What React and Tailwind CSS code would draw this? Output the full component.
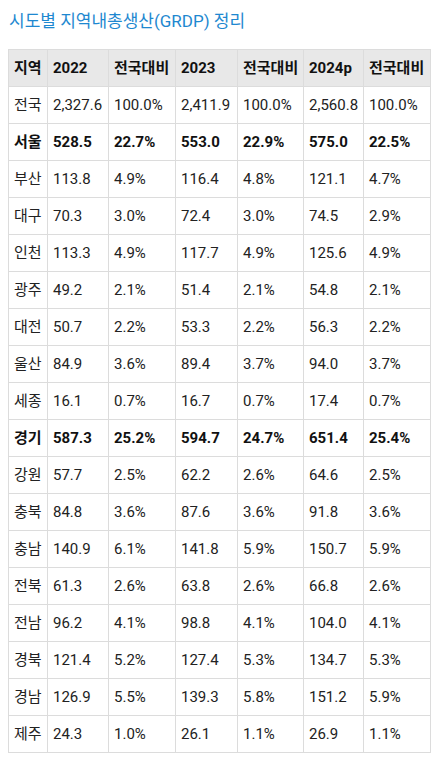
import React from "react";

const ROWS = [
  ["전국", "2,327.6", "100.0%", "2,411.9", "100.0%", "2,560.8", "100.0%"],
  ["서울", "528.5", "22.7%", "553.0", "22.9%", "575.0", "22.5%", true],
  ["부산", "113.8", "4.9%", "116.4", "4.8%", "121.1", "4.7%"],
  ["대구", "70.3", "3.0%", "72.4", "3.0%", "74.5", "2.9%"],
  ["인천", "113.3", "4.9%", "117.7", "4.9%", "125.6", "4.9%"],
  ["광주", "49.2", "2.1%", "51.4", "2.1%", "54.8", "2.1%"],
  ["대전", "50.7", "2.2%", "53.3", "2.2%", "56.3", "2.2%"],
  ["울산", "84.9", "3.6%", "89.4", "3.7%", "94.0", "3.7%"],
  ["세종", "16.1", "0.7%", "16.7", "0.7%", "17.4", "0.7%"],
  ["경기", "587.3", "25.2%", "594.7", "24.7%", "651.4", "25.4%", true],
  ["강원", "57.7", "2.5%", "62.2", "2.6%", "64.6", "2.5%"],
  ["충북", "84.8", "3.6%", "87.6", "3.6%", "91.8", "3.6%"],
  ["충남", "140.9", "6.1%", "141.8", "5.9%", "150.7", "5.9%"],
  ["전북", "61.3", "2.6%", "63.8", "2.6%", "66.8", "2.6%"],
  ["전남", "96.2", "4.1%", "98.8", "4.1%", "104.0", "4.1%"],
  ["경북", "121.4", "5.2%", "127.4", "5.3%", "134.7", "5.3%"],
  ["경남", "126.9", "5.5%", "139.3", "5.8%", "151.2", "5.9%"],
  ["제주", "24.3", "1.0%", "26.1", "1.1%", "26.9", "1.1%"],
];

const HEAD = ["지역", "2022", "전국대비", "2023", "전국대비", "2024p", "전국대비"];

export default function App() {
  return (
    <div
      className="bg-white px-2 pt-[10px] pb-2 text-[#222]"
      style={{ fontFamily: 'Roboto, "Noto Sans CJK KR", sans-serif' }}
    >
      <h2 className="mb-[17px] pl-[1px] text-[17px] leading-[22px] font-normal text-[#1e88d0]">
        시도별 지역내총생산(GRDP) 정리
      </h2>
      <table className="w-[422px] table-fixed border-collapse text-[15px]">
        <colgroup>
          <col className="w-[39px]" />
          <col className="w-[61px]" />
          <col className="w-[67px]" />
          <col className="w-[62px]" />
          <col className="w-[66px]" />
          <col className="w-[60px]" />
          <col className="w-[67px]" />
        </colgroup>
        <thead>
          <tr className="bg-[#e8e8e8]">
            {HEAD.map((h, i) => (
              <th
                key={i}
                className="h-[37px] border border-[#dcdcdc] px-[5px] text-left font-bold text-[#111] whitespace-nowrap"
              >
                {h}
              </th>
            ))}
          </tr>
        </thead>
        <tbody>
          {ROWS.map((r) => (
            <tr key={r[0]}>
              {r.slice(0, 7).map((c, i) => (
                <td
                  key={i}
                  className={
                    "h-[37px] border border-[#dcdcdc] px-[5px] whitespace-nowrap " +
                    (r[7] ? "font-bold text-[#111]" : "")
                  }
                >
                  {c}
                </td>
              ))}
            </tr>
          ))}
        </tbody>
      </table>
    </div>
  );
}
